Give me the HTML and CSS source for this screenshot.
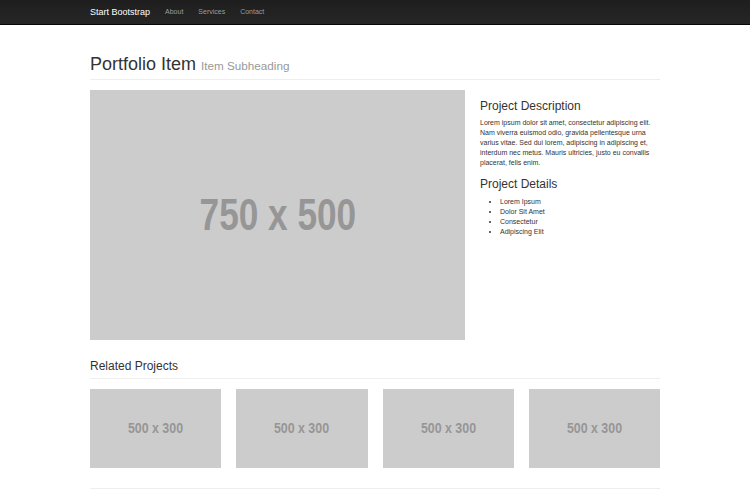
FILE: index.html
```html
<!DOCTYPE html>
<html lang="en">
<head>
<meta charset="utf-8">
<title>Portfolio Item - Start Bootstrap</title>
<link rel="stylesheet" href="styles.css">
</head>
<body>
<nav class="navbar">
  <div class="container nav-inner">
    <a class="brand" href="#">Start Bootstrap</a>
    <ul class="nav-links">
      <li><a href="#">About</a></li>
      <li><a href="#">Services</a></li>
      <li><a href="#">Contact</a></li>
    </ul>
  </div>
</nav>
<main class="container">
  <h1 class="page-header">Portfolio Item <small>Item Subheading</small></h1>
  <div class="item-row">
    <div class="placeholder big"><span>750 x 500</span></div>
    <div class="details">
      <h3>Project Description</h3>
      <p>Lorem ipsum dolor sit amet, consectetur adipiscing elit. Nam viverra euismod odio, gravida pellentesque urna varius vitae. Sed dui lorem, adipiscing in adipiscing et, interdum nec metus. Mauris ultricies, justo eu convallis placerat, felis enim.</p>
      <h3>Project Details</h3>
      <ul>
        <li>Lorem Ipsum</li>
        <li>Dolor Sit Amet</li>
        <li>Consectetur</li>
        <li>Adipiscing Elit</li>
      </ul>
    </div>
  </div>
  <h3 class="page-header related">Related Projects</h3>
  <div class="thumbs">
    <div class="placeholder thumb"><span>500 x 300</span></div>
    <div class="placeholder thumb"><span>500 x 300</span></div>
    <div class="placeholder thumb"><span>500 x 300</span></div>
    <div class="placeholder thumb"><span>500 x 300</span></div>
  </div>
  <hr class="rule">
</main>
</body>
</html>
```
FILE: styles.css
```css
html, body {
  margin: 0;
  padding: 0;
  background: #fff;
}
body {
  font-family: "Liberation Sans", Arial, sans-serif;
  font-size: 7px;
  line-height: 10px;
  color: #333;
}
.container {
  width: 570px;
  margin: 0 auto;
}
.navbar {
  background: linear-gradient(#1e1e1e, #262626);
  border-bottom: 1px solid #080808;
  height: 24px;
}
.nav-inner {
  display: flex;
  align-items: center;
  height: 24px;
}
.brand {
  color: #fff;
  font-size: 9px;
  text-decoration: none;
  padding-right: 7.5px;
}
.nav-links {
  display: flex;
  list-style: none;
  margin: 0;
  padding: 0;
}
.nav-links a {
  color: #9d9d9d;
  text-decoration: none;
  font-size: 7px;
  padding: 0 7.5px;
  display: block;
}
.page-header {
  margin: 0 0 10px;
  padding-bottom: 4.5px;
  border-bottom: 1px solid #eee;
  font-weight: 500;
  line-height: 1.1;
  color: #333;
}
h1.page-header {
  margin-top: 30px;
  font-size: 18px;
}
h1 small {
  font-size: 11.7px;
  color: #999;
  font-weight: normal;
}
.item-row {
  display: flex;
  gap: 15px;
}
.placeholder {
  background: #ccc;
  color: #969696;
  display: flex;
  align-items: center;
  justify-content: center;
  font-family: "Liberation Sans", Arial, sans-serif;
  font-weight: bold;
}
.placeholder span {
  display: inline-block;
  transform: scaleX(0.8);
  white-space: nowrap;
}
.big {
  width: 375px;
  height: 250px;
  flex: none;
  font-size: 44px;
  line-height: 44px;
}
.details {
  width: 180px;
}
.details h3 {
  font-size: 12px;
  line-height: 1.1;
  font-weight: 500;
  margin: 10px 0 5px;
}
.details p {
  margin: 0 0 5px;
}
.details ul {
  margin: 0;
  padding-left: 20px;
}
h3.related {
  margin-top: 20px;
  font-size: 12px;
}
.thumbs {
  display: flex;
  gap: 15px;
  margin-bottom: 15px;
}
.thumb {
  width: 131.25px;
  height: 78.75px;
  font-size: 15.5px;
  line-height: 16px;
}
.rule {
  border: 0;
  border-top: 1px solid #eee;
  margin: 20px 0 0;
}
```
